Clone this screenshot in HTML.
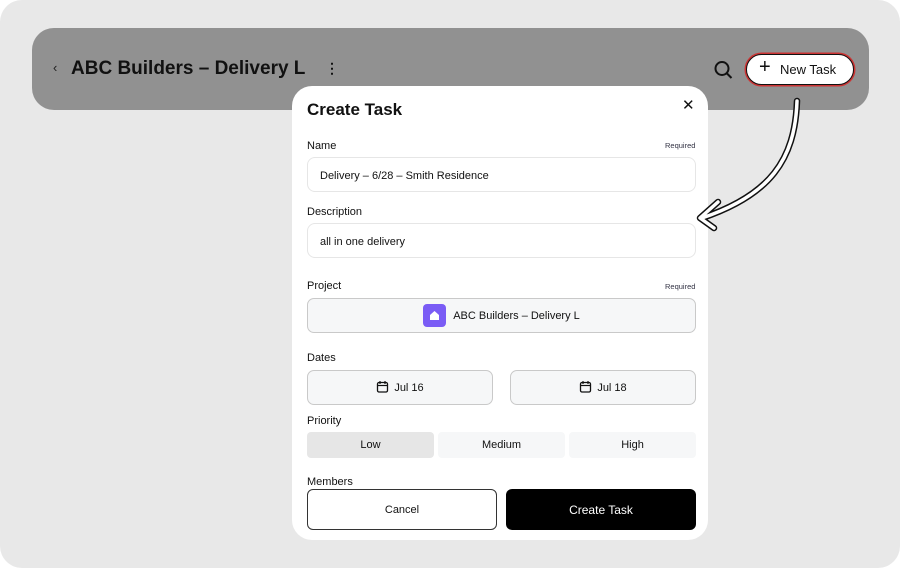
<!DOCTYPE html>
<html><head><meta charset="utf-8"><style>
*{box-sizing:border-box;margin:0;padding:0}
body{width:900px;height:568px;background:#fff;font-family:"Liberation Sans",sans-serif;position:relative;overflow:hidden;color:#111}
.bg{position:absolute;left:0;top:0;width:900px;height:568px;background:#e8e8e8;border-radius:22px}
.bar{position:absolute;left:32px;top:28px;width:837px;height:82px;background:#919191;border-radius:22px}
.title{position:absolute;left:71px;top:58px;font-size:19px;font-weight:bold;color:#111}
.back{position:absolute;left:53px;top:60px;font-size:13px;color:#222}
.dots{position:absolute;left:325px;top:60px;font-size:14px;font-weight:bold}
.nt{position:absolute;left:746px;top:54px;width:108px;height:31px;border:1.5px solid #111;border-radius:16px;background:#fff;box-shadow:0 0 0 1.5px #c33;font-size:13px;padding:7px 0 0 33px}
.nt .p{position:absolute;left:12px;top:1px;font-size:20px;font-weight:300}
.modal{position:absolute;left:292px;top:86px;width:416px;height:454px;background:#fff;border-radius:20px}
.m{position:absolute;font-size:11px}
.h{left:15px;top:14px;font-size:17px;font-weight:bold}
.lbl{font-size:11px;color:#111}
.req{font-size:7.5px;color:#334}
.inp{position:absolute;left:15px;width:389px;height:35px;border:1px solid #e6e6e6;border-radius:8px;font-size:11px;padding:12px 0 0 12px}
.btn{position:absolute;height:35px;border:1px solid #c9c9c9;border-radius:7px;background:#f6f7f8;font-size:11px;text-align:center;line-height:34px}
.pr{position:absolute;top:346px;height:26px;border-radius:4px;background:#f6f7f8;font-size:11px;text-align:center;line-height:27px;width:127px}
</style></head><body>
<div class="bg"></div>
<div class="bar"></div>
<div class="back">‹</div>
<div class="title">ABC Builders – Delivery L</div>
<div class="dots">⋮</div>
<svg style="position:absolute;left:712px;top:59px" width="22" height="22"><circle cx="10" cy="9.5" r="6.5" fill="none" stroke="#111" stroke-width="2"/><line x1="15" y1="14.5" x2="19.5" y2="19" stroke="#111" stroke-width="2"/></svg>
<div class="nt"><span class="p">+</span>New Task</div>
<div class="modal">
<div class="m h">Create Task</div>
<div class="m" style="left:390px;top:10px;font-size:15px">✕</div>
<div class="m lbl" style="left:15px;top:54px">Name</div>
<div class="m req" style="left:373px;top:55px">Required</div>
<div class="inp" style="top:71px">Delivery – 6/28 – Smith Residence</div>
<div class="m lbl" style="left:15px;top:120px">Description</div>
<div class="inp" style="top:137px">all in one delivery</div>
<div class="m lbl" style="left:15px;top:194px">Project</div>
<div class="m req" style="left:373px;top:196px">Required</div>
<div class="btn" style="left:15px;top:212px;width:389px"><span style="display:inline-block;width:23px;height:23px;background:#7a5cf5;border-radius:4px;vertical-align:middle;margin-right:7px;position:relative;top:-1px"><svg width="23" height="23"><path d="M7 16V11L11.5 7 16 11V16Z" fill="#fff"/></svg></span>ABC Builders – Delivery L</div>
<div class="m lbl" style="left:15px;top:266px">Dates</div>
<div class="btn" style="left:15px;top:284px;width:186px"><svg width="13" height="13" style="vertical-align:-2px;margin-right:5px"><rect x="1.5" y="2.5" width="10" height="9.5" rx="1.5" fill="none" stroke="#111" stroke-width="1.3"/><line x1="1.5" y1="5.5" x2="11.5" y2="5.5" stroke="#111" stroke-width="1.2"/><line x1="4" y1="1" x2="4" y2="4" stroke="#111" stroke-width="1.2"/><line x1="9" y1="1" x2="9" y2="4" stroke="#111" stroke-width="1.2"/></svg>Jul 16</div>
<div class="btn" style="left:218px;top:284px;width:186px"><svg width="13" height="13" style="vertical-align:-2px;margin-right:5px"><rect x="1.5" y="2.5" width="10" height="9.5" rx="1.5" fill="none" stroke="#111" stroke-width="1.3"/><line x1="1.5" y1="5.5" x2="11.5" y2="5.5" stroke="#111" stroke-width="1.2"/><line x1="4" y1="1" x2="4" y2="4" stroke="#111" stroke-width="1.2"/><line x1="9" y1="1" x2="9" y2="4" stroke="#111" stroke-width="1.2"/></svg>Jul 18</div>
<div class="m lbl" style="left:15px;top:329px">Priority</div>
<div class="pr" style="left:15px;background:#e6e6e6">Low</div>
<div class="pr" style="left:146px">Medium</div>
<div class="pr" style="left:277px">High</div>
<div class="m lbl" style="left:15px;top:390px">Members</div>
<div style="position:absolute;left:15px;top:403px;width:190px;height:41px;border:1px solid #333;border-radius:6px;font-size:11px;text-align:center;line-height:40px">Cancel</div>
<div style="position:absolute;left:214px;top:403px;width:190px;height:41px;background:#000;color:#fff;border-radius:6px;font-size:12px;text-align:center;line-height:42px">Create Task</div>
</div>
<svg style="position:absolute;left:0;top:0" width="900" height="568">
<g fill="none" stroke-linecap="round" stroke-linejoin="round">
<path d="M797 101 C795 160 770 195 702 218 M718 202 L700 218 L714 228" stroke="#111" stroke-width="6.5"/>
<path d="M797 101 C795 160 770 195 702 218 M718 202 L700 218 L714 228" stroke="#fff" stroke-width="3.5"/>
</g></svg>
</body></html>
